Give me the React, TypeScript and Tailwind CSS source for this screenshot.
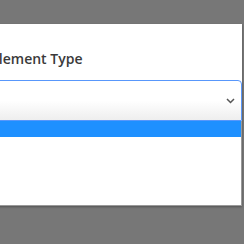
export default function App() {
  return (
    <div className="h-[244px] w-[244px] overflow-hidden bg-[#777777] pt-[24px] font-['Open_Sans',sans-serif]">
      <div className="ml-[-12px] flex h-[182px] w-[254px] flex-col bg-white shadow-[0_1px_2px_rgba(0,0,0,0.3)]">
        <div className="pl-[3px] pt-[25px]">
          <label className="block text-[14px] font-semibold leading-[20px] text-[#3a3a3a]">
            Element Type
          </label>
        </div>

        <div className="mt-[11px] flex h-[41px] items-center justify-end rounded-tr-[4px] border border-[#5897fb] bg-gradient-to-b from-white from-50% to-[#eeeeee] pr-[6px]">
          <svg width="9" height="6" viewBox="0 0 9 6" className="mt-[1px]">
            <path d="M1 1l3.5 3.5L8 1" fill="none" stroke="#555555" strokeWidth="1.5" />
          </svg>
        </div>

        <ul className="flex-1 border-r border-b border-[#999999] bg-white">
          <li className="flex h-[16px] items-center bg-[#1e90ff] text-[12px] leading-[16px] text-white">
            <span className="ml-[-2px] mt-[4px]">-</span>
          </li>
        </ul>
      </div>
    </div>
  );
}
